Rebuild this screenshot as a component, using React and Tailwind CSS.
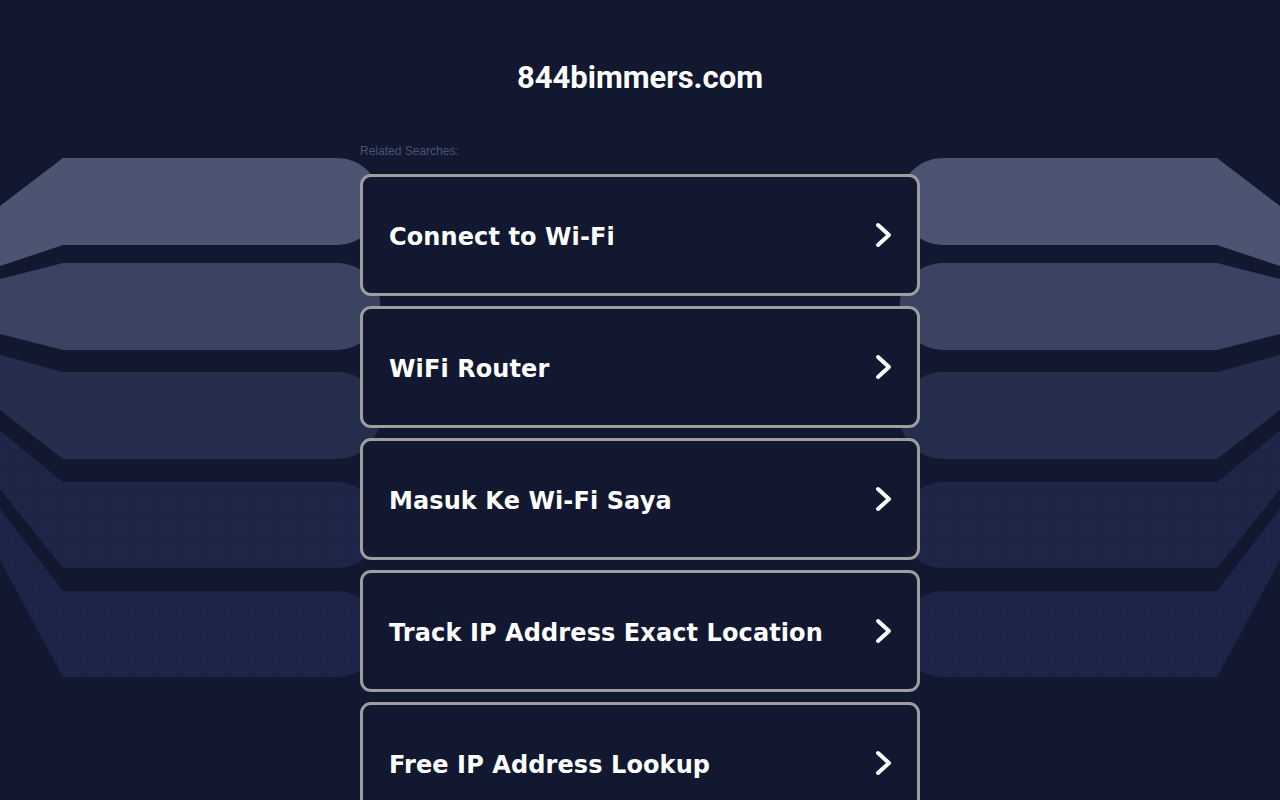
import React from "react";

const searches = [
  "Connect to Wi-Fi",
  "WiFi Router",
  "Masuk Ke Wi-Fi Saya",
  "Track IP Address Exact Location",
  "Free IP Address Lookup",
];

// left-side bands: [top, bottom, leftTop, leftBottom, fill]
const bands = [
  [158, 245, 206, 266, "#4b5572"],
  [263, 350, 279, 334, "#3a4361"],
  [372, 459, 355, 410, "#262e4e"],
  [482, 568, 431, 489, "url(#dotsA)"],
  [591, 677, 509, 560, "url(#dotsB)"],
];

function bandPath([top, bottom, lt, lb]) {
  const r = (bottom - top) / 2;
  return `M0,${lt} L63,${top} L337,${top} A${r},${r} 0 0 1 337,${bottom} L63,${bottom} L0,${lb} Z`;
}

function Backdrop() {
  return (
    <svg
      className="absolute left-0 top-0 w-full h-[800px] pointer-events-none"
      viewBox="0 0 1280 800"
      preserveAspectRatio="none"
    >
      <defs>
        <pattern id="dotsA" width="3" height="3" patternUnits="userSpaceOnUse">
          <rect width="3" height="3" fill="#1d2546" />
          <rect x="1" y="1" width="1" height="1" fill="#242d55" />
        </pattern>
        <pattern id="dotsB" width="3" height="3" patternUnits="userSpaceOnUse">
          <rect width="3" height="3" fill="#1b2347" />
          <rect x="1" y="1" width="1" height="1" fill="#222b56" />
        </pattern>
      </defs>
      <g>
        {bands.map((b, i) => (
          <path key={i} d={bandPath(b)} fill={b[4]} />
        ))}
      </g>
      {/* mirrored right side */}
      <g transform="translate(1280,0) scale(-1,1)">
        {bands.map((b, i) => (
          <path key={i} d={bandPath(b)} fill={b[4]} />
        ))}
      </g>
    </svg>
  );
}

function Chevron() {
  return (
    <svg width="20" height="28" viewBox="0 0 20 28" className="shrink-0">
      <polyline
        points="5,4 16,14 5,24"
        fill="none"
        stroke="#ffffff"
        strokeWidth="4"
        strokeLinecap="round"
        strokeLinejoin="round"
      />
    </svg>
  );
}

export default function App() {
  return (
    <div className="relative min-h-screen overflow-hidden bg-[#111830]">
      <Backdrop />
      <div className="relative mx-auto w-[560px] pt-[60px] pb-10">
        <h1 className="text-center text-white font-bold text-[31px] leading-[36px] font-['Roboto',sans-serif]">
          844bimmers.com
        </h1>
        <p className="mt-[47px] mb-[15px] text-[12px] leading-[16px] text-[#4a5477] font-['Liberation_Sans',Arial,sans-serif]">
          Related Searches:
        </p>
        <div className="flex flex-col gap-[10px]">
          {searches.map((s) => (
            <a
              key={s}
              href="#"
              className="flex h-[122px] items-center justify-between rounded-[11px] border-[3px] border-[#9e9e9e] bg-[#111830] pl-[26px] pr-[24px]"
            >
              <span className="pt-[3px] text-white font-bold text-[24px] tracking-[0.1px] font-['DejaVu_Sans',Verdana,sans-serif]">
                {s}
              </span>
              <Chevron />
            </a>
          ))}
        </div>
      </div>
    </div>
  );
}
